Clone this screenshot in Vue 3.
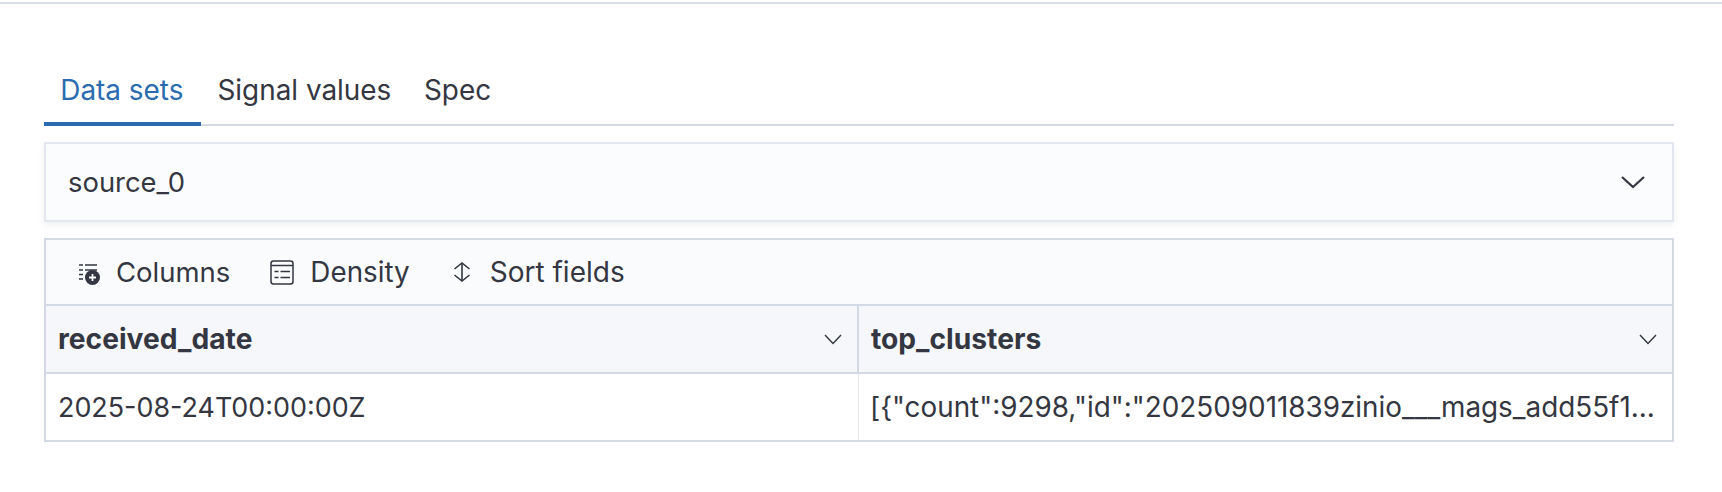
<script setup>
const tabs = [
  { label: 'Data sets', active: true },
  { label: 'Signal values', active: false },
  { label: 'Spec', active: false },
]
</script>

<template>
  <div class="page">
    <div class="topline"></div>
    <main class="content">
      <nav class="tabs">
        <button v-for="t in tabs" :key="t.label" class="tab" :class="{ active: t.active }">{{ t.label }}</button>
      </nav>
      <section class="accordion">
        <span>source_0</span>
        <svg class="acc-chev" width="26" height="14" viewBox="0 0 26 14"><path d="M2 2 L13 12 L24 2" fill="none" stroke="#343741" stroke-width="2.2"/></svg>
      </section>
      <section class="grid">
        <div class="toolbar">
          <div class="tool">
            <svg class="ico-columns" width="21" height="21" viewBox="0 0 21 21">
              <g stroke="#343741" stroke-width="1.4" fill="none">
                <path d="M0 1h4M0 6h4M0 10.5h4M0 15h4"/>
                <path d="M6 1h12M6 6h12"/>
              </g>
              <circle cx="13.5" cy="13.5" r="7.5" fill="#343741"/>
              <path d="M13.5 10v7M10 13.5h7" stroke="#fff" stroke-width="1.8"/>
            </svg>
            <span>Columns</span>
          </div>
          <div class="tool density">
            <svg width="25" height="25" viewBox="0 0 25 25" fill="none" stroke="#343741" stroke-width="1.5">
              <rect x="1" y="1" width="22" height="23" rx="2.5"/>
              <path d="M1 5.5h22"/>
              <path d="M4.5 11.5h4M10.5 11.5h9.5M4.5 17.5h4M10.5 17.5h9.5"/>
            </svg>
            <span>Density</span>
          </div>
          <div class="tool sort">
            <svg width="24" height="20" viewBox="0 0 24 20" fill="none" stroke="#343741" stroke-width="1.6">
              <path d="M4.5 7 L12 1 L19.5 7"/>
              <path d="M4.5 13 L12 19 L19.5 13"/>
              <path d="M12 1.5v17"/>
            </svg>
            <span>Sort fields</span>
          </div>
        </div>
        <div class="row head">
          <div class="cell first"><span>received_date</span>
            <svg width="18" height="11" viewBox="0 0 18 11"><path d="M1 1 L9 9.5 L17 1" fill="none" stroke="#343741" stroke-width="1.4"/></svg>
          </div>
          <div class="cell second"><span>top_clusters</span>
            <svg width="18" height="11" viewBox="0 0 18 11"><path d="M1 1 L9 9.5 L17 1" fill="none" stroke="#343741" stroke-width="1.4"/></svg>
          </div>
        </div>
        <div class="row body">
          <div class="cell first"><span class="date">2025-08-24T00:00:00Z</span></div>
          <div class="cell second"><span class="clip">[{"count":9298,"id":"202509011839zinio___mags_add55f1...</span></div>
        </div>
      </section>
    </main>
  </div>
</template>

<style>
html, body { background: #fff; }
</style>

<style scoped>
.page {
  width: 1722px;
  height: 492px;
  overflow: hidden;
  background: #fff;
  font-family: Inter, "Liberation Sans", sans-serif;
  color: #343741;
  padding-top: 2px;
  box-sizing: border-box;
}
.topline { height: 2px; background: #d9dfea; }
.content { padding: 0 48px 0 44px; }
.tabs {
  display: flex;
  margin-top: 54px;
  height: 68px;
  box-sizing: border-box;
  border-bottom: 2px solid #d3dae6;
}
.tab {
  all: unset;
  height: 68px;
  box-sizing: border-box;
  padding: 0 16.3px;
  font-size: 27.9px;
  line-height: 62px;
  color: #343741;
  border-bottom: 4px solid transparent;
}
.tab.active {
  color: #2b6cb0;
  border-bottom-color: #2b6cb0;
  padding-right: 17.7px;
}
.accordion {
  margin-top: 16px;
  height: 80px;
  box-sizing: border-box;
  border: 2px solid #e3e8f0;
  background: #fbfcfd;
  box-shadow: 0 3px 6px rgba(152,162,179,.15);
  display: flex;
  align-items: center;
  justify-content: space-between;
  padding: 0 26px 1px 22px;
  font-size: 27.4px;
}
.grid {
  margin-top: 16px;
  border: 2px solid #d3dae6;
}
.toolbar {
  height: 64px;
  background: #fafbfd;
  display: flex;
  align-items: center;
  font-size: 27.5px;
  padding-left: 33px;
}
.tool { display: flex; align-items: center; gap: 16px; margin-right: 40px; }
.tool.density { gap: 15px; font-size: 27.8px; }
.tool.sort { gap: 16px; font-size: 28px; }
.ico-columns { margin-top: 5px; }
.row { display: grid; grid-template-columns: 813px 1fr; }
.head { height: 70px; background: #f5f7fa; border-top: 2px solid #d3dae6; border-bottom: 2px solid #d3dae6; box-sizing: border-box; }
.body { height: 66px; }
.cell { display: flex; align-items: center; justify-content: space-between; padding: 0 15px 0 12px; font-size: 28.2px; white-space: nowrap; overflow: hidden; }
.head .cell { font-weight: 700; }
.head .first { border-right: 2px solid #d3dae6; }
.body .first { border-right: 1px solid #e3e8f0; }
.body .second { padding-left: 11px; }
.date { font-size: 26.9px; }
.clip { font-size: 27.85px; }
</style>
